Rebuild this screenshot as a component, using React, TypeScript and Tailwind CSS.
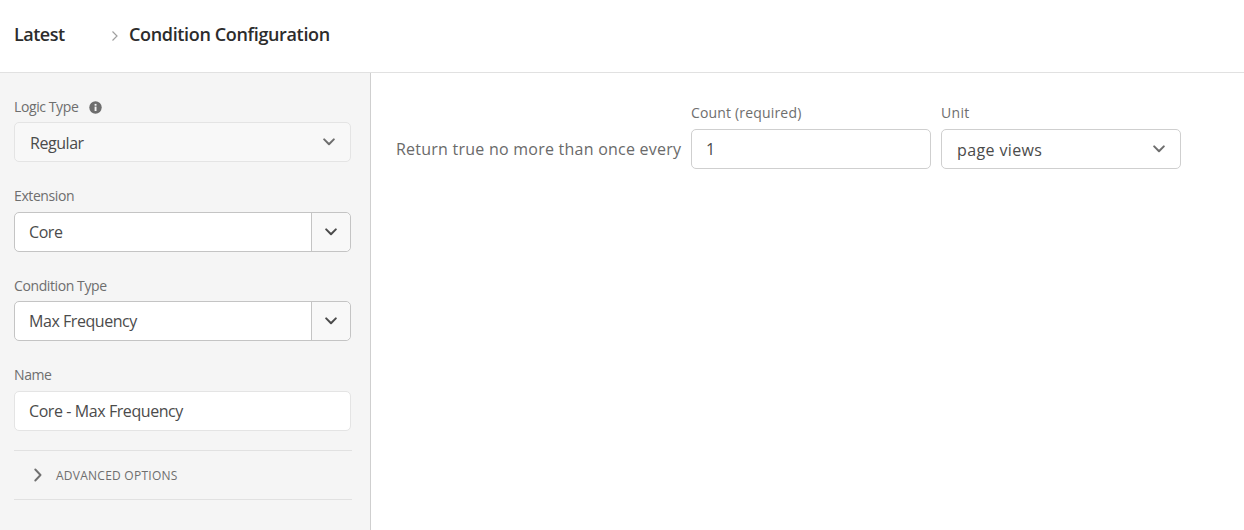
import React from "react";

function Chevron({ className = "" }: { className?: string }) {
  return (
    <svg width="12" height="8" viewBox="0 0 12 8" fill="none" className={className}>
      <path d="M1.2 1.4 6 6.2l4.8-4.8" stroke="currentColor" strokeWidth="2" strokeLinecap="round" strokeLinejoin="round" />
    </svg>
  );
}

function Label({ children, className = "" }: { children: React.ReactNode; className?: string }) {
  return <div className={`text-[14px] leading-[18px] text-[#6e6e6e] ${className}`}>{children}</div>;
}

function Combo({ value, gap }: { value: string; gap: string }) {
  return (
    <div className={`${gap} flex h-[40px] w-[337px] rounded-[5px] border border-[#c4c4c4] bg-white`}>
      <div className="flex flex-1 items-center pl-[14px] text-[16px] text-[#4b4b4b] tracking-[-0.45px]">{value}</div>
      <div className="flex w-[39px] items-center justify-center rounded-r-[5px] border-l border-[#c4c4c4] bg-[#f8f8f8] text-[#4b4b4b]">
        <Chevron />
      </div>
    </div>
  );
}

export default function App() {
  return (
    <div className="flex h-[530px] w-[1244px] flex-col overflow-hidden bg-white font-['Open_Sans',sans-serif]">
      <header className="flex h-[73px] shrink-0 items-center border-b border-[#e1e1e1] pb-[3px] pl-[14px]">
        <span className="w-[96px] text-[18px] font-semibold tracking-[-0.5px] text-[#2c2c2c]">Latest</span>
        <svg width="8" height="12" viewBox="0 0 8 12" fill="none" className="ml-[1px] mt-[3px] text-[#a0a0a0]">
          <path d="M1.5 1.5 6 6l-4.5 4.5" stroke="currentColor" strokeWidth="1.2" />
        </svg>
        <span className="ml-[10px] text-[18px] font-semibold tracking-[-0.35px] text-[#2c2c2c]">Condition Configuration</span>
      </header>
      <div className="flex min-h-0 flex-1">
        <aside className="w-[371px] shrink-0 border-r border-[#cfcfcf] bg-[#f5f5f5] pl-[14px] pt-[25px]">
          <div className="flex items-center gap-[11px]">
            <Label className="tracking-[-0.4px]">Logic Type</Label>
            <svg width="13" height="13" viewBox="0 0 13 13">
              <circle cx="6.5" cy="6.5" r="6.2" fill="#6e6e6e" />
              <rect x="5.6" y="5.6" width="1.9" height="4.4" fill="#f5f5f5" />
              <rect x="5.6" y="2.9" width="1.9" height="1.8" fill="#f5f5f5" />
            </svg>
          </div>
          <div className="mt-[6px] flex h-[40px] w-[337px] items-center justify-between rounded-[5px] border border-[#e4e4e4] bg-[#f8f8f8] pl-[15px] pr-[15px] text-[16px] tracking-[-0.45px] text-[#4b4b4b]">
            <span className="pt-[2px]">Regular</span>
            <Chevron className="text-[#6e6e6e]" />
          </div>
          <Label className="mt-[25px] tracking-[-0.4px]">Extension</Label>
          <Combo value="Core" gap="mt-[7px]" />
          <Label className="mt-[25px] tracking-[-0.4px]">Condition Type</Label>
          <Combo value="Max Frequency" gap="mt-[6px]" />
          <Label className="mt-[25px] tracking-[-0.4px]">Name</Label>
          <div className="mt-[7px] flex h-[40px] w-[337px] items-center rounded-[5px] border border-[#e4e4e4] bg-white pl-[14px] text-[16px] tracking-[-0.42px] text-[#4b4b4b]">
            Core - Max Frequency
          </div>
          <div className="mt-[19px] flex h-[50px] w-[338px] items-center border-y border-[#e1e1e1] pl-[20px]">
            <svg width="8" height="14" viewBox="0 0 8 14" fill="none" className="text-[#707070]">
              <path d="M1.3 1.5 6.5 7l-5.2 5.5" stroke="currentColor" strokeWidth="1.9" strokeLinecap="round" strokeLinejoin="round" />
            </svg>
            <span className="ml-[14px] pt-[2px] text-[12px] tracking-[0.25px] text-[#6e6e6e]">ADVANCED OPTIONS</span>
          </div>
        </aside>
        <main className="flex flex-1 items-start pl-[25px] pt-[31px]">
          <span className="mt-[35px] w-[295px] text-[16px] leading-[20px] tracking-[0.24px] text-[#6a6a6a]">Return true no more than once every</span>
          <div className="w-[240px]">
            <Label className="tracking-[0.17px]">Count (required)</Label>
            <div className="mt-[7px] flex h-[40px] items-center rounded-[5px] border border-[#cfcfcf] pl-[14px] text-[16px] text-[#4b4b4b]">1</div>
          </div>
          <div className="ml-[10px] w-[240px]">
            <Label className="tracking-[0.3px]">Unit</Label>
            <div className="mt-[7px] flex h-[40px] items-center justify-between rounded-[5px] border border-[#cfcfcf] pl-[15px] pr-[15px] text-[16px] tracking-[0.38px] text-[#4b4b4b]">
              <span className="pt-[2px]">page views</span>
              <Chevron className="text-[#6e6e6e]" />
            </div>
          </div>
        </main>
      </div>
    </div>
  );
}
